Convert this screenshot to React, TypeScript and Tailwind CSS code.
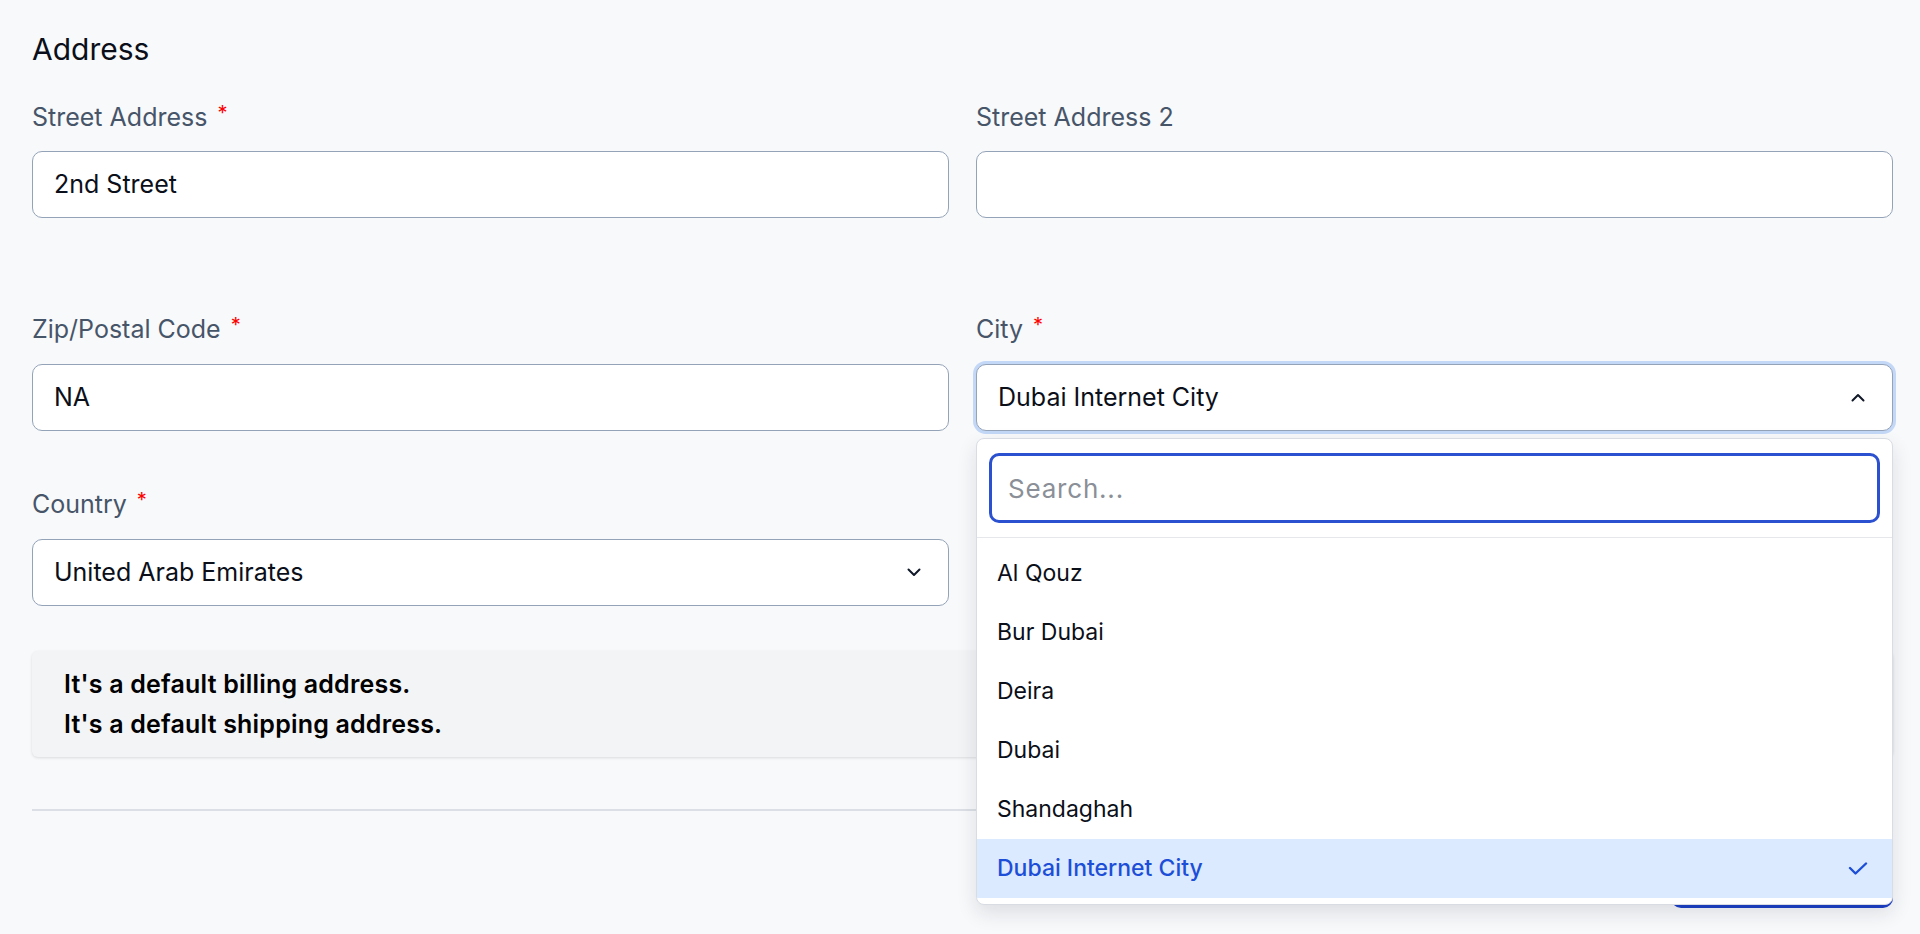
import React from 'react';

const cities = ['Al Qouz', 'Bur Dubai', 'Deira', 'Dubai', 'Shandaghah', 'Dubai Internet City'];

const ChevronDown = ({ className }: { className?: string }) => (
  <svg className={className} width="14" height="9" viewBox="0 0 14 9" fill="none">
    <path d="M1.5 1.5L7 7L12.5 1.5" stroke="currentColor" strokeWidth="2" strokeLinecap="round" strokeLinejoin="round" />
  </svg>
);

const ChevronUp = ({ className }: { className?: string }) => (
  <svg className={className} width="14" height="9" viewBox="0 0 14 9" fill="none">
    <path d="M1.5 7.5L7 2L12.5 7.5" stroke="currentColor" strokeWidth="2" strokeLinecap="round" strokeLinejoin="round" />
  </svg>
);

const Check = ({ className }: { className?: string }) => (
  <svg className={className} width="20" height="14" viewBox="0 0 20 14" fill="none">
    <path d="M2 6L7.5 11.5L18 1.5" stroke="currentColor" strokeWidth="2.4" strokeLinecap="round" strokeLinejoin="round" />
  </svg>
);

const Label = ({ text, required }: { text: string; required?: boolean }) => (
  <label className="flex items-start text-[25px] leading-8 text-[#475569]">
    <span>{text}</span>
    {required && <span className="ml-[10px] text-[20px] leading-6 text-[#ff0000]">*</span>}
  </label>
);

const inputBox =
  'flex h-[67px] w-full items-center rounded-[10px] border border-[#94a3b8] bg-white px-[21px] text-[25px] text-[#0b0f19]';

const App: React.FC = () => {
  return (
    <div className="min-h-screen bg-[#f8f9fb] pl-8 pr-[27px] pt-[31px] font-['Inter',sans-serif]">
      <h2 className="text-[30px] leading-9 text-[#0b0f19]">Address</h2>

      <div className="mt-[34px] grid grid-cols-2 gap-x-[27px]">
        <div>
          <Label text="Street Address" required />
          <div className={`mt-[18px] ${inputBox}`}>2nd Street</div>
        </div>
        <div>
          <Label text="Street Address 2" />
          <div className={`mt-[18px] ${inputBox}`}></div>
        </div>
      </div>

      <div className="mt-[95px] grid grid-cols-2 gap-x-[27px]">
        <div>
          <Label text="Zip/Postal Code" required />
          <div className={`mt-[19px] ${inputBox}`}>NA</div>
        </div>
        <div>
          <Label text="City" required />
          <div className="relative mt-[19px]">
            <div className="flex h-[67px] w-full items-center justify-between rounded-[10px] border border-[#94a3b8] bg-white pl-[21px] pr-[27px] text-[25px] text-[#0b0f19] ring-[3px] ring-[#c3d7f7]">
              <span>Dubai Internet City</span>
              <ChevronUp className="text-[#111827]" />
            </div>
            <div className="absolute left-0 right-0 top-full z-10 mt-[7px] overflow-hidden rounded-[8px] border border-[#d9dde3] bg-white shadow-[0_8px_20px_rgba(15,23,42,0.12)]">
              <div className="px-3 py-[14px]">
                <div className="flex h-[70px] items-center rounded-[10px] border-[3px] border-[#2b50d0] px-[16px] text-[26px] tracking-[0.8px] text-[#8a8f98]">
                  Search...
                </div>
              </div>
              <div className="border-t border-[#e5e7eb] pb-[6px] pt-[6px]">
                {cities.map((city) => {
                  const selected = city === 'Dubai Internet City';
                  return (
                    <div
                      key={city}
                      className={`flex h-[59px] items-center justify-between pl-5 pr-6 text-[23px] ${
                        selected ? 'bg-[#dbeafe] font-medium text-[#1d4ed8]' : 'text-[#0b0f19]'
                      }`}
                    >
                      <span>{city}</span>
                      {selected && <Check className="text-[#1d4ed8]" />}
                    </div>
                  );
                })}
              </div>
            </div>
          </div>
        </div>
      </div>

      <div className="mt-[57px] grid grid-cols-2 gap-x-[27px]">
        <div>
          <Label text="Country" required />
          <div className={`mt-[19px] justify-between pr-[27px] ${inputBox}`}>
            <span>United Arab Emirates</span>
            <ChevronDown className="text-[#111827]" />
          </div>
        </div>
      </div>

      <div className="mt-[45px] rounded-[6px] bg-[#f3f4f6] px-8 py-[13px] text-[25px] font-semibold leading-10 tracking-[0.2px] text-black shadow-[0_1px_3px_rgba(0,0,0,0.12)]">
        <p>It's a default billing address.</p>
        <p>It's a default shipping address.</p>
      </div>

      <div className="mt-[52px] h-[2px] bg-[#dcdfe5]" />

      <div className="mt-[30px] flex justify-end">
        <button className="h-[67px] w-[222px] rounded-[10px] bg-[#1d40c8] text-[25px] font-semibold text-white">
          Save
        </button>
      </div>
    </div>
  );
};

export default App;
